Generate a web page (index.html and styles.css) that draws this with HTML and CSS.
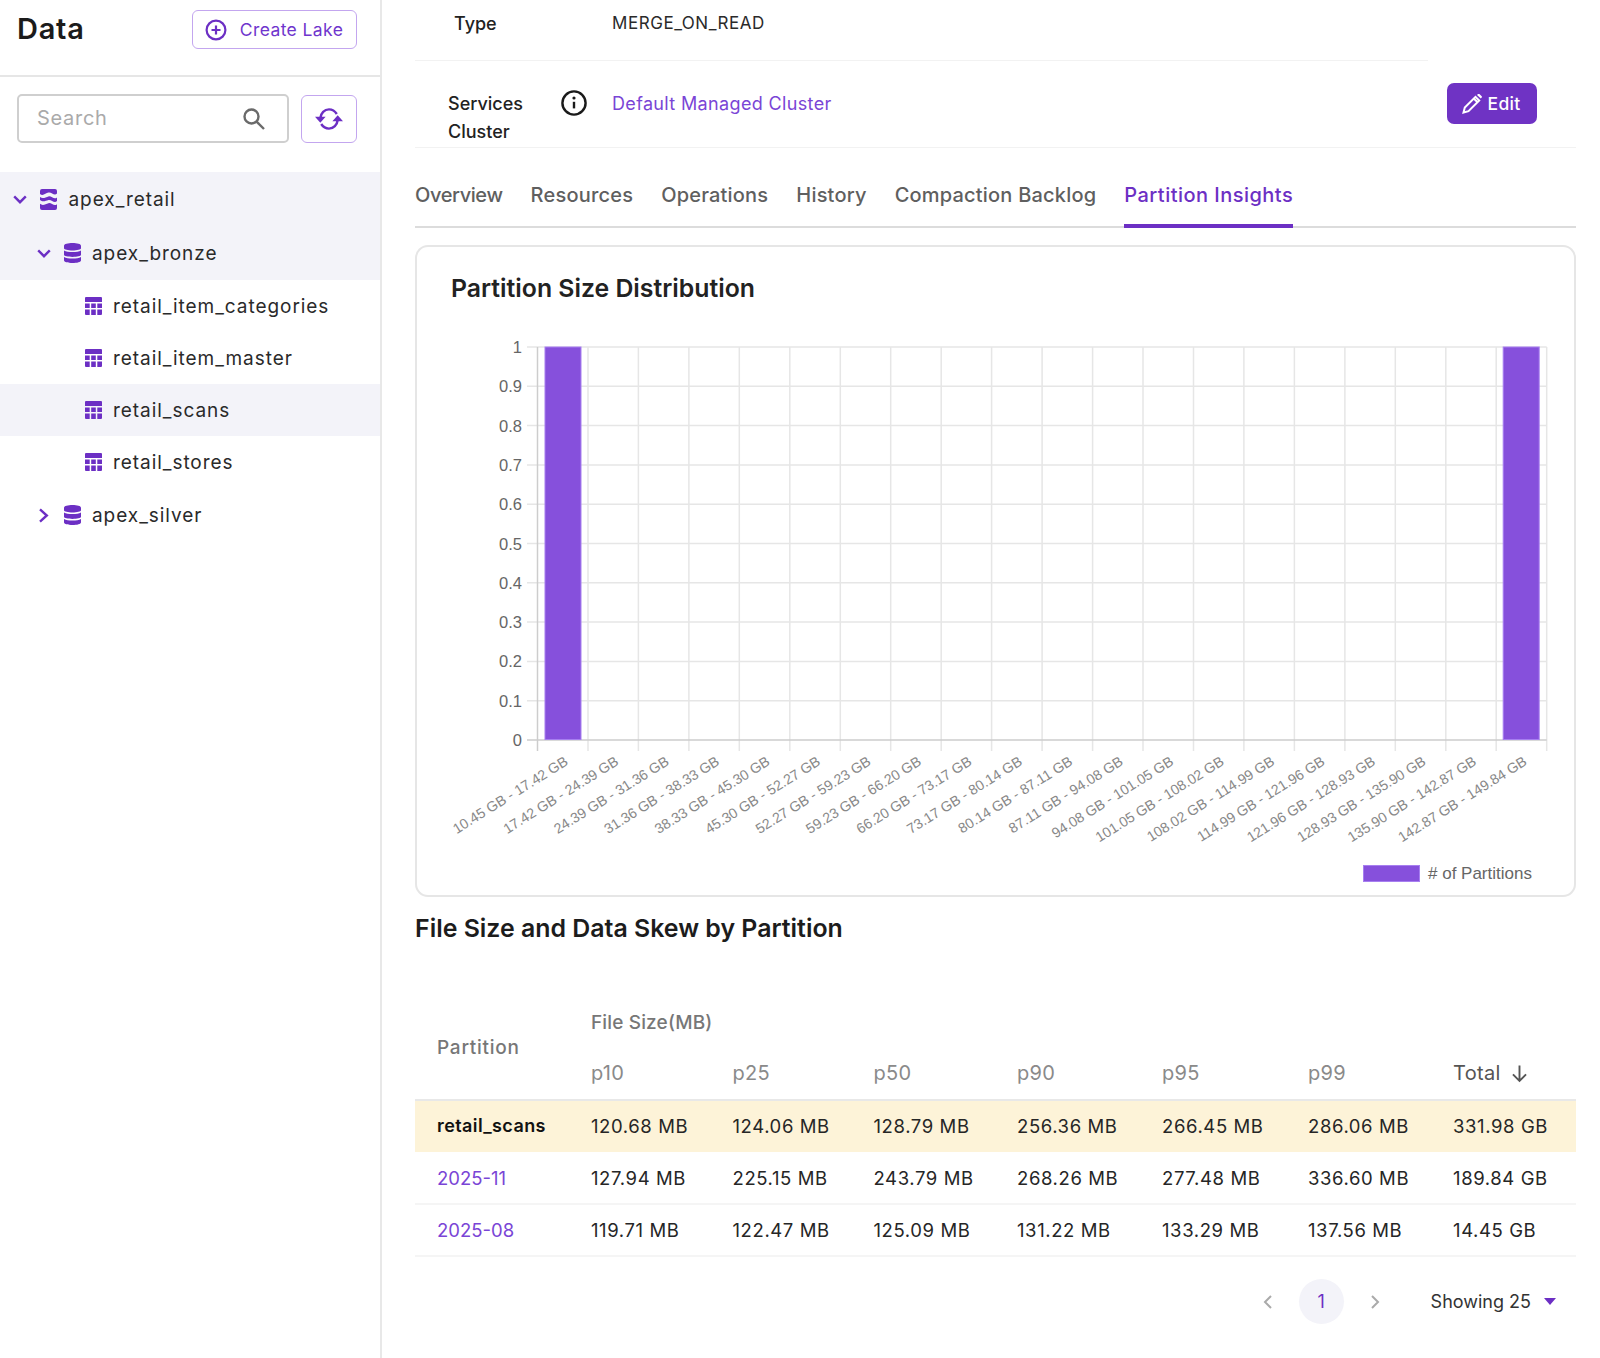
FILE: index.html
```html
<!DOCTYPE html>
<html lang="en">
<head>
<meta charset="utf-8">
<title>Data</title>
<link rel="stylesheet" href="styles.css">
</head>
<body>
<div class="app">
  <aside class="sidebar">
    <div class="side-head">
      <h1 class="side-title">Data</h1>
      <button class="btn-outline create-btn">
        <svg class="ic-plus" viewBox="0 0 22 22"><circle cx="11" cy="11" r="9.4"/><path d="M11 6.5v9M6.5 11h9"/></svg>
        <span>Create Lake</span>
      </button>
    </div>
    <div class="search-row">
      <div class="search-box">
        <span class="search-ph">Search</span>
        <svg class="ic-search" viewBox="0 0 24 24"><circle cx="9.5" cy="9.5" r="7"/><path d="M14.6 14.6 22 22"/></svg>
      </div>
      <button class="btn-outline refresh-btn">
        <svg class="ic-sync" viewBox="0 0 28 24"><path d="M5.2 11.500C5.800 6 9.500 2.400 14 2.400c3.200 0 5.800 1.500 7.800 4.600"/><path d="M22.800 12.500c-.6 5.500-4.300 9.100-8.800 9.100-3.200 0-5.800-1.500-7.800-4.600"/><path class="fill" d="M0 9.800h10.600L5.300 15.800zM28 14.200H17.400L22.700 8.200z"/></svg>
      </button>
    </div>
    <ul class="tree">
      <li class="tree-row lvl0 hl">
        <svg class="chev" viewBox="0 0 14 9"><path d="M1.2 1.4 7 7.2l5.8-5.8"/></svg>
        <svg class="ic-lake" viewBox="0 0 17 21"><path d="M2 0h13a2 2 0 0 1 2 2v2.600c-2.800 2.800-5.600-1.800-8.500-1S2.800 7.400 0 5V2a2 2 0 0 1 2-2zM0 8c2.800 2.400 5.600.2 8.500-.6s5.700 3.800 8.500 1v3.600c-2.800 2.800-5.600-1.800-8.500-1S2.800 13.400 0 11zM0 14.800c2.800 2.400 5.600.2 8.500-.6s5.700 3.800 8.500 1V19a2 2 0 0 1-2 2H2a2 2 0 0 1-2-2z"/></svg>
        <span class="name">apex_retail</span>
      </li>
      <li class="tree-row lvl1 hl">
        <svg class="chev" viewBox="0 0 14 9"><path d="M1.2 1.400 7 7.200l5.800-5.800"/></svg>
        <svg class="ic-db" viewBox="0 0 17 20"><path d="M0 2.800C0 1 4 0 8.500 0S17 1 17 2.800v2.400C17 6.600 13 7.400 8.500 7.400S0 6.600 0 5.200zM0 7.500c1.800 1.100 5 1.600 8.500 1.600s6.700-.5 8.500-1.600v4.300c0 1.300-4 2.100-8.500 2.100S0 13.100 0 11.800zM0 14c1.800 1.100 5 1.600 8.500 1.600S15.200 15.100 17 14v3.200C17 19 13 20 8.500 20S0 19 0 17.200z"/></svg>
        <span class="name">apex_bronze</span>
      </li>
      <li class="tree-row lvl2">
        <svg class="ic-table" viewBox="0 0 17 18"><path d="M0 1a1 1 0 0 1 1-1h15a1 1 0 0 1 1 1v4H0zM0 6.600h4.700v4.400H0zM6.200 6.600h4.600v4.400H6.200zM12.300 6.600H17v4.400h-4.700zM0 12.500h4.700V18H1a1 1 0 0 1-1-1zM6.200 12.500h4.600V18H6.200zM12.300 12.500H17V17a1 1 0 0 1-1 1h-3.700z"/></svg>
        <span class="name">retail_item_categories</span>
      </li>
      <li class="tree-row lvl2">
        <svg class="ic-table" viewBox="0 0 17 18"><path d="M0 1a1 1 0 0 1 1-1h15a1 1 0 0 1 1 1v4H0zM0 6.600h4.700v4.400H0zM6.200 6.600h4.600v4.400H6.200zM12.300 6.600H17v4.400h-4.700zM0 12.500h4.700V18H1a1 1 0 0 1-1-1zM6.200 12.500h4.600V18H6.200zM12.300 12.500H17V17a1 1 0 0 1-1 1h-3.700z"/></svg>
        <span class="name">retail_item_master</span>
      </li>
      <li class="tree-row lvl2 hl">
        <svg class="ic-table" viewBox="0 0 17 18"><path d="M0 1a1 1 0 0 1 1-1h15a1 1 0 0 1 1 1v4H0zM0 6.600h4.700v4.400H0zM6.200 6.600h4.600v4.400H6.200zM12.300 6.600H17v4.400h-4.700zM0 12.500h4.700V18H1a1 1 0 0 1-1-1zM6.200 12.500h4.600V18H6.200zM12.300 12.500H17V17a1 1 0 0 1-1 1h-3.700z"/></svg>
        <span class="name">retail_scans</span>
      </li>
      <li class="tree-row lvl2">
        <svg class="ic-table" viewBox="0 0 17 18"><path d="M0 1a1 1 0 0 1 1-1h15a1 1 0 0 1 1 1v4H0zM0 6.600h4.700v4.400H0zM6.200 6.600h4.600v4.400H6.200zM12.300 6.600H17v4.400h-4.700zM0 12.500h4.700V18H1a1 1 0 0 1-1-1zM6.200 12.500h4.600V18H6.200zM12.300 12.500H17V17a1 1 0 0 1-1 1h-3.700z"/></svg>
        <span class="name">retail_stores</span>
      </li>
      <li class="tree-row lvl1">
        <svg class="chev chev-right" viewBox="0 0 14 15"><path d="M3 1.400 9.800 7.500 3 13.600"/></svg>
        <svg class="ic-db" viewBox="0 0 17 20"><path d="M0 2.800C0 1 4 0 8.500 0S17 1 17 2.800v2.400C17 6.600 13 7.400 8.500 7.400S0 6.600 0 5.200zM0 7.500c1.800 1.100 5 1.600 8.500 1.600s6.700-.5 8.500-1.600v4.300c0 1.300-4 2.100-8.500 2.100S0 13.100 0 11.800zM0 14c1.800 1.100 5 1.600 8.500 1.600S15.200 15.100 17 14v3.200C17 19 13 20 8.500 20S0 19 0 17.200z"/></svg>
        <span class="name">apex_silver</span>
      </li>
    </ul>
  </aside>

  <main class="main">
    <div class="info-row type-row">
      <span class="info-label">Type</span>
      <span class="info-value">MERGE_ON_READ</span>
    </div>
    <div class="info-row svc-row">
      <div class="svc-label">
        <span class="svc-text">Services Cluster</span>
        <svg class="ic-info" viewBox="0 0 26 26"><circle cx="13" cy="13" r="11.600"/><path d="M13 11.800v6.600"/><circle class="dot" cx="13" cy="8" r="1.600"/></svg>
      </div>
      <a class="info-link">Default Managed Cluster</a>
      <button class="btn-edit">
        <svg class="ic-pencil" viewBox="0 0 20 20"><path d="M1.500 18.500l1.300-5L13.500 2.800l3.700 3.700L6.500 17.200z"/><path d="M11.800 4.500l3.700 3.700"/><path class="fill" d="M15 .9l1-.9c.5-.3 1-.3 1.400 0l2.300 2.300c.3.400.3.900 0 1.300l-.9 1z"/></svg>
        <span>Edit</span>
      </button>
    </div>

    <nav class="tabs">
      <a class="tab tab-tight">Overview</a>
      <a class="tab">Resources</a>
      <a class="tab">Operations</a>
      <a class="tab">History</a>
      <a class="tab">Compaction Backlog</a>
      <a class="tab active">Partition Insights</a>
    </nav>

    <section class="card">
      <h2 class="card-title">Partition Size Distribution</h2>
      <svg class="chart" viewBox="417 330 1157 565">
        <path class="grid" d="M588 347V751M638.400 347V751M688.900 347V751M739.300 347V751M789.800 347V751M840.300 347V751M890.700 347V751M941.200 347V751M991.600 347V751M1042.100 347V751M1092.600 347V751M1143 347V751M1193.500 347V751M1243.900 347V751M1294.400 347V751M1344.900 347V751M1395.300 347V751M1445.800 347V751M1496.200 347V751M1546.700 347V751"/>
        <path class="grid" d="M527 347H1546.700M527 386.300H1546.700M527 425.600H1546.700M527 464.900H1546.700M527 504.200H1546.700M527 543.500H1546.700M527 582.800H1546.700M527 622.100H1546.700M527 661.400H1546.700M527 700.700H1546.700"/>
        <path class="axis" d="M537.500 347V751M527 740H1546.700"/>
        <rect class="bar" x="545" y="347" width="36" height="392.500"/>
        <rect class="bar" x="1503.200" y="347" width="36" height="392.500"/>
        <g class="ylab">
          <text x="522" y="347">1</text><text x="522" y="386.300">0.9</text><text x="522" y="425.600">0.8</text><text x="522" y="464.900">0.7</text><text x="522" y="504.200">0.6</text><text x="522" y="543.500">0.5</text><text x="522" y="582.800">0.4</text><text x="522" y="622.100">0.3</text><text x="522" y="661.400">0.2</text><text x="522" y="700.700">0.1</text><text x="522" y="740">0</text>
        </g>
        <g class="xlab">
          <text x="569" y="764" transform="rotate(-32 569 764)">10.45 GB - 17.42 GB</text>
          <text x="619.500" y="764" transform="rotate(-32 619.500 764)">17.42 GB - 24.39 GB</text>
          <text x="670" y="764" transform="rotate(-32 670 764)">24.39 GB - 31.36 GB</text>
          <text x="720.400" y="764" transform="rotate(-32 720.400 764)">31.36 GB - 38.33 GB</text>
          <text x="770.900" y="764" transform="rotate(-32 770.900 764)">38.33 GB - 45.30 GB</text>
          <text x="821.300" y="764" transform="rotate(-32 821.300 764)">45.30 GB - 52.27 GB</text>
          <text x="871.800" y="764" transform="rotate(-32 871.800 764)">52.27 GB - 59.23 GB</text>
          <text x="922.200" y="764" transform="rotate(-32 922.200 764)">59.23 GB - 66.20 GB</text>
          <text x="972.700" y="764" transform="rotate(-32 972.700 764)">66.20 GB - 73.17 GB</text>
          <text x="1023.200" y="764" transform="rotate(-32 1023.200 764)">73.17 GB - 80.14 GB</text>
          <text x="1073.600" y="764" transform="rotate(-32 1073.600 764)">80.14 GB - 87.11 GB</text>
          <text x="1124.100" y="764" transform="rotate(-32 1124.100 764)">87.11 GB - 94.08 GB</text>
          <text x="1174.500" y="764" transform="rotate(-32 1174.500 764)">94.08 GB - 101.05 GB</text>
          <text x="1225" y="764" transform="rotate(-32 1225 764)">101.05 GB - 108.02 GB</text>
          <text x="1275.500" y="764" transform="rotate(-32 1275.500 764)">108.02 GB - 114.99 GB</text>
          <text x="1325.900" y="764" transform="rotate(-32 1325.900 764)">114.99 GB - 121.96 GB</text>
          <text x="1376.400" y="764" transform="rotate(-32 1376.400 764)">121.96 GB - 128.93 GB</text>
          <text x="1426.800" y="764" transform="rotate(-32 1426.800 764)">128.93 GB - 135.90 GB</text>
          <text x="1477.300" y="764" transform="rotate(-32 1477.300 764)">135.90 GB - 142.87 GB</text>
          <text x="1527.800" y="764" transform="rotate(-32 1527.800 764)">142.87 GB - 149.84 GB</text>
        </g>
        <rect class="bar" x="1363.500" y="865.500" width="56" height="16"/>
        <text class="legend" x="1428" y="879">&#35; of Partitions</text>
      </svg>
    </section>

    <h2 class="section-title">File Size and Data Skew by Partition</h2>

    <table class="data-table">
      <colgroup>
        <col class="c-part"><col class="c-p10"><col class="c-p25"><col class="c-p50"><col class="c-p90"><col class="c-p95"><col class="c-p99"><col class="c-total">
      </colgroup>
      <thead>
        <tr>
          <th rowspan="2" class="th-part">Partition</th>
          <th colspan="6" class="th-group">File Size(MB)</th>
          <th class="th-blank"></th>
        </tr>
        <tr class="sub-head">
          <th>p10</th><th>p25</th><th>p50</th><th>p90</th><th>p95</th><th>p99</th>
          <th class="th-total"><span class="total-wrap">Total <svg class="ic-down" viewBox="0 0 18 18"><path d="M9 1.500V16M2.800 9.800 9 16l6.200-6.200"/></svg></span></th>
        </tr>
      </thead>
      <tbody>
        <tr class="row-total">
          <td class="cell-name">retail_scans</td><td>120.68 MB</td><td>124.06 MB</td><td>128.79 MB</td><td>256.36 MB</td><td>266.45 MB</td><td>286.06 MB</td><td>331.98 GB</td>
        </tr>
        <tr>
          <td><a class="link">2025-11</a></td><td>127.94 MB</td><td>225.15 MB</td><td>243.79 MB</td><td>268.26 MB</td><td>277.48 MB</td><td>336.60 MB</td><td>189.84 GB</td>
        </tr>
        <tr>
          <td><a class="link">2025-08</a></td><td>119.71 MB</td><td>122.47 MB</td><td>125.09 MB</td><td>131.22 MB</td><td>133.29 MB</td><td>137.56 MB</td><td>14.45 GB</td>
        </tr>
      </tbody>
    </table>

    <div class="pager">
      <svg class="pg-chev" viewBox="0 0 10 16"><path d="M8 2 2 8l6 6"/></svg>
      <span class="pg-num">1</span>
      <svg class="pg-chev" viewBox="0 0 10 16"><path d="M2 2l6 6-6 6"/></svg>
      <span class="pg-show">Showing 25</span>
      <svg class="pg-caret" viewBox="0 0 12 7"><path d="M0 0h12L6 7z"/></svg>
    </div>
  </main>
</div>
</body>
</html>
```

FILE: styles.css
```css
* { box-sizing: border-box; }
html, body { margin: 0; padding: 0; height: 100%; overflow: hidden; background: #fff; }
body { font-family: Inter, "Noto Sans", sans-serif; color: #222; font-size: 18px; }
h1, h2, ul { margin: 0; padding: 0; }
ul { list-style: none; }
button { font-family: inherit; cursor: pointer; }

.app { display: flex; height: 1358px; }

.sidebar { width: 382px; flex: none; border-right: 2px solid #e8e8e8; }
.side-head { height: 77px; border-bottom: 2px solid #e6e6e6; display: flex; align-items: flex-start; justify-content: space-between; padding: 10px 23px 0 17px; }
.side-title { font-size: 29px; font-weight: 600; color: #1b1b1b; line-height: 38px; letter-spacing: 0.75px; }
.btn-outline { background: #fff; border: 1.5px solid #c3a6ef; border-radius: 6px; color: #6f35cd; display: flex; align-items: center; justify-content: center; padding: 0; }
.create-btn { width: 165px; height: 39px; gap: 13px; font-size: 17.5px; letter-spacing: 0.4px; padding-right: 1px; }
.ic-plus { width: 22px; height: 22px; fill: none; stroke: #6c2fc4; stroke-width: 2.2; }

.search-row { display: flex; justify-content: space-between; padding: 17px 23px 0 17px; height: 95px; align-items: flex-start; }
.search-box { width: 272px; height: 49px; border: 2px solid #cfcfcf; border-radius: 5px; display: flex; align-items: center; justify-content: space-between; padding: 0 21px 2px 18px; }
.search-ph { color: #aaa; font-size: 20px; letter-spacing: 0.7px; }
.ic-search { width: 24px; height: 24px; fill: none; stroke: #6a6a6a; stroke-width: 2.4; margin-top: 2px; }
.refresh-btn { width: 56px; height: 48px; margin-top: 1px; }
.ic-sync { width: 28px; height: 24px; fill: none; stroke: #6c2fc4; stroke-width: 2.4; }
.ic-sync .fill { fill: #6c2fc4; stroke: none; }

.tree-row { display: flex; align-items: center; height: 52px; font-size: 19px; color: #2a2a2a; letter-spacing: 0.95px; }
.tree-row.hl { background: #f3f3f9; }
.lvl0 { padding-left: 13px; height: 54px; }
.lvl1 { padding-left: 37px; height: 54px; }
.lvl2 { padding-left: 84.500px; }
.chev { width: 14px; height: 9px; fill: none; stroke: #6c2fc4; stroke-width: 2.400; margin-right: 13px; flex: none; }
.chev-right { height: 15px; }
.ic-lake { width: 17px; height: 21px; fill: #6c2fc4; flex: none; margin-right: 11.500px; }
.ic-db { width: 17px; height: 20px; fill: #6c2fc4; flex: none; margin-right: 11px; }
.ic-table { width: 17px; height: 18px; fill: #6c2fc4; flex: none; margin-right: 11.500px; }

.main { flex: 1; padding: 0 24px 0 33px; min-width: 0; }
.info-row { display: flex; align-items: flex-start; }
.type-row { height: 61px; width: 1013px; border-bottom: 1px solid #f2f2f2; padding-top: 12px; }
.info-label { width: 197px; padding-left: 39px; font-size: 18px; font-weight: 500; color: #222; line-height: 24px; }
.info-value { font-size: 17px; color: #2a2a2a; line-height: 22px; letter-spacing: 0.55px; }
.svc-row { height: 87px; border-bottom: 1px solid #f2f2f2; padding-top: 29px; position: relative; }
.svc-label { width: 197px; padding-left: 33px; display: flex; align-items: flex-start; }
.svc-text { width: 94px; font-size: 18px; font-weight: 500; line-height: 27.500px; color: #222; }
.ic-info { width: 26px; height: 26px; fill: none; stroke: #1a1a1a; stroke-width: 2.400; margin-left: 19px; margin-top: 0; flex: none; }
.ic-info .dot { fill: #1a1a1a; stroke: none; }
.info-link { color: #7a45d6; font-size: 18px; line-height: 28px; letter-spacing: 0.35px; }
.btn-edit { position: absolute; right: 39px; top: 22px; width: 90px; height: 41px; background: #6f33c4; border: none; border-radius: 7px; color: #fff; display: flex; align-items: center; justify-content: center; gap: 6px; font-size: 17.500px; font-weight: 500; letter-spacing: 0.3px; padding: 0; }
.ic-pencil { width: 20px; height: 20px; fill: none; stroke: #fff; stroke-width: 2; margin-left: -2px; }
.ic-pencil .fill { fill: #fff; stroke: none; }

.tabs { display: flex; gap: 28px; height: 80px; border-bottom: 2px solid #dcdcdc; padding-top: 30px; }
.tab { font-size: 20px; font-weight: 500; color: #5f5f5f; height: 50px; line-height: 34px; letter-spacing: 0.2px; }
.tab.tab-tight { letter-spacing: -0.4px; }
.tab.active { color: #6c2fc4; border-bottom: 4px solid #6c2fc4; letter-spacing: 0.47px; }

.card { margin-top: 17px; height: 652px; border: 2px solid #e6e6e6; border-radius: 13px; }
.card-title { font-size: 24.800px; font-weight: 600; color: #222; height: 83px; padding: 24px 0 0 34px; line-height: 34px; }
.chart { display: block; width: 1157px; height: 565px; }
.grid { stroke: #e6e6e6; stroke-width: 1.500; fill: none; }
.axis { stroke: #cdcdcd; stroke-width: 1.500; fill: none; }
.bar { fill: #8650dc; stroke: #a77ff0; stroke-width: 1; }
.ylab text { font-family: "Liberation Sans", Arial, sans-serif; font-size: 16.500px; fill: #666; text-anchor: end; dominant-baseline: central; }
.xlab text { font-family: "Liberation Sans", Arial, sans-serif; font-size: 14.200px; fill: #888; text-anchor: end; }
.legend { font-family: "Liberation Sans", Arial, sans-serif; font-size: 17px; fill: #666; }

.section-title { font-size: 24.900px; font-weight: 600; color: #1c1c1c; margin-top: 14px; line-height: 34px; }

.data-table { margin-top: 53px; width: 100%; table-layout: fixed; border-collapse: collapse; font-size: 18.500px; }
.c-part { width: 176px; } .c-p10 { width: 141.500px; } .c-p25 { width: 141px; } .c-p50 { width: 143.500px; }
.c-p90 { width: 145px; } .c-p95 { width: 146px; } .c-p99 { width: 145px; } .c-total { width: 123px; }
.data-table th { font-weight: 500; text-align: left; padding: 0 0 2px; height: 51px; color: #777; font-size: 19px; letter-spacing: 0.15px; }
.data-table th.th-part { padding-left: 22px; border-bottom: 2px solid #e8e8e8; letter-spacing: 0.75px; }
.data-table .sub-head th { font-weight: 400; color: #8a8a8a; border-bottom: 2px solid #e8e8e8; font-size: 20px; letter-spacing: 0.3px; }
.data-table .sub-head .th-total { color: #555; }
.total-wrap { display: inline-flex; align-items: center; gap: 9px; }
.ic-down { width: 19px; height: 19px; fill: none; stroke: #555; stroke-width: 1.800; }
.data-table td { height: 52px; padding: 0; color: #262626; border-bottom: 2px solid #f5f5f5; letter-spacing: 0.6px; }
.data-table td:first-child { padding-left: 22px; letter-spacing: 0; }
.data-table .row-total td { background: #fdf3d8; border-bottom: none; padding-bottom: 2px; }
.data-table td.cell-name { font-weight: 600; color: #111; font-size: 18px; letter-spacing: 0.4px; }
.link { color: #7a45d6; }

.pager { display: flex; align-items: center; justify-content: flex-end; margin-top: 22px; padding-right: 20px; height: 45px; }
.pg-chev { width: 10px; height: 16px; fill: none; stroke: #aaa; stroke-width: 2; }
.pg-num { width: 45px; height: 45px; border-radius: 50%; background: #f3f3f9; color: #6c2fc4; display: flex; align-items: center; justify-content: center; font-size: 18px; margin: 0 26px 0 26px; }
.pg-show { margin-left: 51px; font-size: 18px; color: #333; }
.pg-caret { width: 12px; height: 7px; fill: #6c2fc4; margin-left: 13px; }
```
